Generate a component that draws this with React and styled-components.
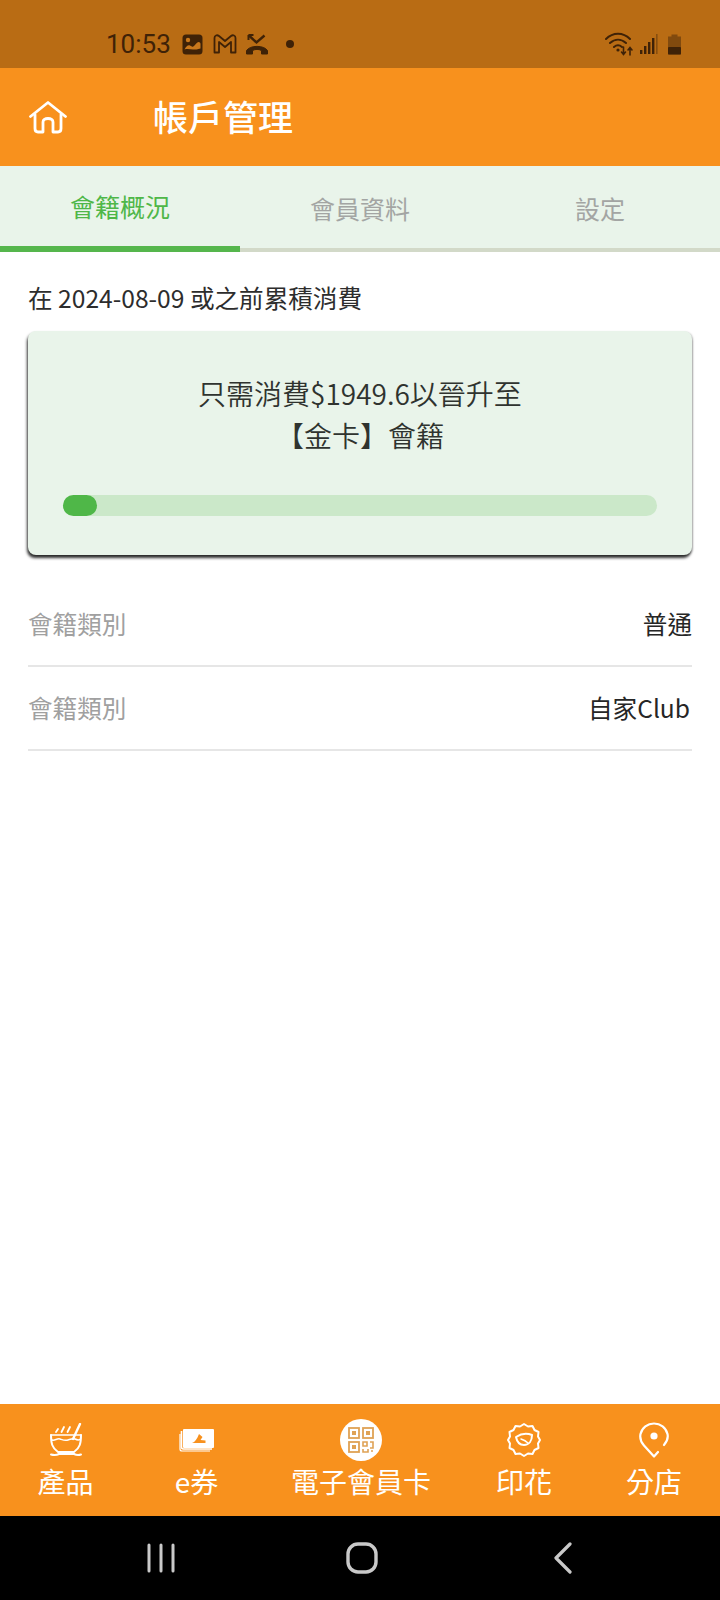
import React from "react";
import styled, { createGlobalStyle } from "styled-components";

const Global = createGlobalStyle`
  html, body { margin: 0; padding: 0; background: #fff; }
  body { font-family: "Noto Sans CJK TC", "Noto Sans", sans-serif; }
  * { box-sizing: border-box; }
`;

const Page = styled.div`
  width: 720px;
  height: 1600px;
  display: flex;
  flex-direction: column;
  overflow: hidden;
`;

const StatusBar = styled.div`
  height: 68px;
  flex: none;
  background: #b96c14;
  display: flex;
  align-items: center;
  justify-content: space-between;
  padding: 20px 38px 0 106px;
  color: #3f2207;
`;

const StatusGroup = styled.div`
  display: flex;
  align-items: center;
  gap: ${(p) => p.$gap || 8}px;
`;

const Clock = styled.span`
  font-family: Roboto, sans-serif;
  font-size: 26px;
  margin-right: 3px;
`;

const BatterySlot = styled.span`
  display: flex;
  margin-left: 4px;
`;

const Header = styled.header`
  height: 98px;
  flex: none;
  background: #f8911d;
  display: flex;
  align-items: center;
  padding: 0 0 0 29px;
  color: #fff;
`;

const Title = styled.h1`
  margin: 0 0 4px 86px;
  font-size: 35px;
  font-weight: 500;
  line-height: 1;
`;

const Tabs = styled.div`
  height: 86px;
  flex: none;
  background: #e9f4ea;
  display: flex;
  border-bottom: 4px solid #d2d9c8;
`;

const Tab = styled.div`
  flex: 1;
  display: flex;
  align-items: center;
  justify-content: center;
  font-size: 25px;
  margin-bottom: -4px;
  height: 86px;
  padding-bottom: ${(p) => (p.$active ? 0 : 2)}px;
  color: ${(p) => (p.$active ? "#4fb748" : "#a3a5a3")};
  border-bottom: ${(p) => (p.$active ? "6px solid #55b64c" : "none")};
`;

const Content = styled.main`
  flex: 1;
  padding: 0 28px;
`;

const Note = styled.p`
  margin: 27px 0 0;
  font-size: 24.6px;
  line-height: 36px;
  color: #2d2d2d;
`;

const Card = styled.section`
  margin-top: 16px;
  height: 224px;
  background: #e9f4ea;
  border-radius: 8px;
  box-shadow: -1px 3px 3px rgba(0, 0, 0, 0.8), 1px 1px 2px rgba(0, 0, 0, 0.25);
  padding: 41px 35px 0;
`;

const CardText = styled.div`
  text-align: center;
  font-size: 28px;
  line-height: 42px;
  font-weight: 350;
  color: #2f332f;
`;

const Track = styled.div`
  margin-top: 39px;
  height: 21px;
  border-radius: 11px;
  background: #cbe8c9;
`;

const Fill = styled.div`
  height: 100%;
  border-radius: 11px;
  background: #4fb748;
`;

const Rows = styled.div`
  margin-top: 28px;
`;

const Row = styled.div`
  height: 84px;
  display: flex;
  align-items: center;
  justify-content: space-between;
  border-bottom: 2px solid #e6e6e6;
  font-size: 24.6px;
  padding-bottom: 2px;
`;

const RowLabel = styled.span`
  color: #a0a0a0;
`;

const RowValue = styled.span`
  color: #262626;
  margin-right: ${(p) => p.$inset || 0}px;
`;

const BottomNav = styled.nav`
  height: 112px;
  flex: none;
  background: #f8911d;
  display: flex;
  color: #fff;
`;

const NavItem = styled.div`
  width: ${(p) => p.$w}px;
  flex: none;
  display: flex;
  flex-direction: column;
  align-items: center;
  padding-top: 14px;
`;

const NavIcon = styled.div`
  height: 44px;
  display: flex;
  align-items: center;
  justify-content: center;
`;

const NavLabel = styled.span`
  font-size: 28px;
  line-height: 36px;
  margin-top: 1px;
  white-space: nowrap;
`;

const QrBadge = styled.div`
  width: 42px;
  height: 42px;
  border-radius: 50%;
  background: #fff;
  display: flex;
  align-items: center;
  justify-content: center;
`;

const SystemBar = styled.div`
  height: 84px;
  flex: none;
  background: #000;
  display: flex;
  align-items: center;
  padding: 0 57px 0 60px;
`;

const SystemSlot = styled.div`
  flex: 1;
  display: flex;
  justify-content: center;
`;

const PhotoIcon = () => (
  <svg width="21" height="21" viewBox="0 0 21 21">
    <rect x="0.500" y="0.500" width="20" height="20" rx="3.500" fill="#3f2207" />
    <circle cx="6" cy="6" r="2.200" fill="#c9781c" />
    <path d="M2.500 15.500c1.500-3 3.500-5 5.500-4s2.500 2 4 0.500 3-4 4.500-4 2 1 2 2v4.500c-3 1-5 1-7.500 1s-5.500-1-8.500 0z" fill="#c9781c" />
  </svg>
);

const MailIcon = () => (
  <svg width="26" height="20" viewBox="-2 0 26 20" fill="none" stroke="#3f2207" strokeWidth="1.800" strokeLinejoin="round">
    <path d="M1.500 18.500V4c0-2.500 2.500-3.500 4.500-2l6 5 6-5c2-1.500 4.500-.5 4.500 2v14.500h-4.500V8L12 13 6 8v10.500z" />
  </svg>
);

const MissedCallIcon = () => (
  <svg width="24" height="22" viewBox="0 0 24 22" fill="none" stroke="#3f2207">
    <path d="M3.500 2l8 7.500 8-7" strokeWidth="2.400" />
    <path d="M3.500 2h5M3.500 2v5" strokeWidth="2" />
    <path d="M1.500 21v-3.500c3.500-5.500 17.500-5.500 21 0V21h-6v-3.500c-3-1.500-6-1.500-9 0V21z" fill="#3f2207" strokeWidth="1" />
  </svg>
);

const WifiIcon = () => (
  <svg width="30" height="24" viewBox="0 0 30 24" fill="none" stroke="#3f2207" strokeWidth="2" strokeLinecap="round">
    <path d="M1 7c7-7 17-7 24 0M5 11c5-4.500 11-4.500 16 0M9 15c3-2.500 5-2.500 8 0" />
    <circle cx="13" cy="18" r="1.600" fill="#3f2207" stroke="none" />
    <path d="M18.500 15v7M16.500 20l2 2.500 2-2.500M25 23v-7M23 18l2-2.500 2 2.500" strokeWidth="1.600" />
  </svg>
);

const SignalIcon = () => (
  <svg width="18" height="22" viewBox="0 0 18 22" fill="#3f2207">
    <rect x="0" y="17" width="2.400" height="4" />
    <rect x="4" y="13" width="2.400" height="8" />
    <rect x="8" y="9" width="2.400" height="12" />
    <rect x="12" y="5" width="2.400" height="16" />
    <rect x="16" y="1" width="1.600" height="20" opacity="0.4" />
  </svg>
);

const BatteryIcon = () => (
  <svg width="15" height="22" viewBox="0 0 15 22">
    <path d="M4.500 1.500h6V3.500H14v18H1v-18h3.500z" fill="#3f2207" opacity="0.45" />
    <rect x="1" y="14" width="13" height="7.500" rx="1" fill="#3f2207" />
  </svg>
);

const HomeIcon = () => (
  <svg width="38" height="33" viewBox="0 0 38 33" fill="none" stroke="#fff" strokeWidth="2.800" strokeLinecap="round" strokeLinejoin="round">
    <path d="M1.500 15.500L19 1.500l17.500 14" />
    <path d="M6 13.500V27.500c0 2 1 3.500 3 3.500h5V21c0-2 2-3.500 5-3.500s5 1.500 5 3.500v10h5c2 0 3-1.500 3-3.500V13.500" />
  </svg>
);

const BowlIcon = () => (
  <svg width="34" height="34" viewBox="0 0 34 34" fill="none" stroke="#fff" strokeWidth="2" strokeLinecap="round" strokeLinejoin="round">
    <path d="M9 6l-2 3M15 4l-2.500 5M21 4l-2.500 5" strokeWidth="1.800" />
    <path d="M31 1l-7 15" strokeWidth="2.400" />
    <path d="M2 12h30" strokeWidth="1.600" />
    <path d="M2 12c0 8 1 13 7 17h16c6-4 7-9 7-17" />
    <path d="M3 17c3 1 5-2 8-1s5 2 8 1 5-2 7-1 4 1 5 .5" strokeWidth="1.500" />
    <path d="M2 31.500c4 1 6 .5 8-.5h15c2 1 4 1.500 7 .5" />
  </svg>
);

const VoucherIcon = () => (
  <svg width="36" height="24" viewBox="0 0 36 24" fill="none">
    <rect x="4" y="1" width="31" height="19" rx="1" fill="#fff" />
    <path d="M2.500 3v16c0 1.500 1 2 2 2H33" stroke="#fff" strokeWidth="1.600" />
    <path d="M1 6v15c0 1.500 1 2 2 2h28" stroke="#fff" strokeWidth="1.200" />
    <path d="M13 15c3-1 5-4 7-9l3.500 3-2 3 5 .5v2.500z" fill="#f8911d" />
  </svg>
);

const QrIcon = () => (
  <svg width="26" height="26" viewBox="0 0 26 26" fill="none" stroke="#dfa255" strokeWidth="1.800">
    <rect x="1" y="1" width="10" height="10" />
    <rect x="15" y="1" width="10" height="10" />
    <rect x="1" y="15" width="10" height="10" />
    <rect x="4" y="4" width="4" height="4" fill="#dfa255" stroke="none" />
    <rect x="18" y="4" width="4" height="4" fill="#dfa255" stroke="none" />
    <rect x="4" y="18" width="4" height="4" fill="#dfa255" stroke="none" />
    <path d="M15 15h4v4h-4zM22 15h3v6h-3M15 22v3h5v-3M23 24h2" strokeWidth="1.600" />
  </svg>
);

const StampIcon = () => (
  <svg width="36" height="36" viewBox="0 0 36 36" fill="none" stroke="#fff" strokeWidth="2" strokeLinecap="round" strokeLinejoin="round">
    <path d="M18 2l4 2.500 4.500-.5 2 4 4 2-.5 4.500L34 18l-2 3.500.5 4.500-4 2-2 4-4.500-.5L18 34l-4-2.500-4.500.5-2-4-4-2 .5-4.500L2 18l2-3.500L3.500 10l4-2 2-4 4.500.5z" />
    <path d="M10 15c6-4 11-4 16-2 0 6-3 10-8 10-4 0-7-3-8-8z" />
    <path d="M15 17c3 1 5 2 7 4" strokeWidth="1.500" />
  </svg>
);

const PinIcon = () => (
  <svg width="30" height="36" viewBox="0 0 30 36" fill="none" stroke="#fff" strokeWidth="2.200" strokeLinecap="round" strokeLinejoin="round">
    <path d="M19 30l-4 4.500-10-11C1 19 1 14.500 1.500 12 3 5.500 8.500 1.500 15 1.500S27 5.500 28.500 12c.8 3.500-.5 7.500-3.500 11" />
    <circle cx="15" cy="14" r="3.600" fill="#fff" stroke="none" />
  </svg>
);

const MenuKey = () => (
  <svg width="30" height="30" viewBox="0 0 30 30" stroke="#c9c9c9" strokeWidth="3" strokeLinecap="round">
    <path d="M3 2v26M15 2v26M27 2v26" />
  </svg>
);

const HomeKey = () => (
  <svg width="32" height="32" viewBox="0 0 32 32" fill="none" stroke="#c9c9c9" strokeWidth="3.400">
    <rect x="2" y="2" width="28" height="28" rx="10" />
  </svg>
);

const BackKey = () => (
  <svg width="20" height="32" viewBox="0 0 20 32" fill="none" stroke="#c9c9c9" strokeWidth="3.200" strokeLinecap="round" strokeLinejoin="round">
    <path d="M17 2L3 16l14 14" />
  </svg>
);

const navItems = [
  { label: "產品", w: 131, icon: <BowlIcon /> },
  { label: "e券", w: 131, icon: <VoucherIcon /> },
  { label: "電子會員卡", w: 198, icon: <QrBadge><QrIcon /></QrBadge> },
  { label: "印花", w: 128, icon: <StampIcon /> },
  { label: "分店", w: 132, icon: <PinIcon /> },
];

export default function App() {
  return (
    <Page>
      <Global />
      <StatusBar>
        <StatusGroup>
          <Clock>10:53</Clock>
          <PhotoIcon />
          <MailIcon />
          <MissedCallIcon />
          <svg width="24" height="10" viewBox="0 0 24 10"><circle cx="13" cy="5" r="4" fill="#3f2207" /></svg>
        </StatusGroup>
        <StatusGroup $gap={5}>
          <WifiIcon />
          <SignalIcon />
          <BatterySlot><BatteryIcon /></BatterySlot>
        </StatusGroup>
      </StatusBar>
      <Header>
        <HomeIcon />
        <Title>帳戶管理</Title>
      </Header>
      <Tabs>
        <Tab $active>會籍概況</Tab>
        <Tab>會員資料</Tab>
        <Tab>設定</Tab>
      </Tabs>
      <Content>
        <Note>在 2024-08-09 或之前累積消費</Note>
        <Card>
          <CardText>
            只需消費$1949.6以晉升至
            <br />
            【金卡】會籍
          </CardText>
          <Track>
            <Fill style={{ width: `${(34 / 594) * 100}%` }} />
          </Track>
        </Card>
        <Rows>
          <Row>
            <RowLabel>會籍類別</RowLabel>
            <RowValue>普通</RowValue>
          </Row>
          <Row>
            <RowLabel>會籍類別</RowLabel>
            <RowValue $inset={2}>自家Club</RowValue>
          </Row>
        </Rows>
      </Content>
      <BottomNav>
        {navItems.map((item) => (
          <NavItem key={item.label} $w={item.w}>
            <NavIcon>{item.icon}</NavIcon>
            <NavLabel>{item.label}</NavLabel>
          </NavItem>
        ))}
      </BottomNav>
      <SystemBar>
        <SystemSlot><MenuKey /></SystemSlot>
        <SystemSlot><HomeKey /></SystemSlot>
        <SystemSlot><BackKey /></SystemSlot>
      </SystemBar>
    </Page>
  );
}
